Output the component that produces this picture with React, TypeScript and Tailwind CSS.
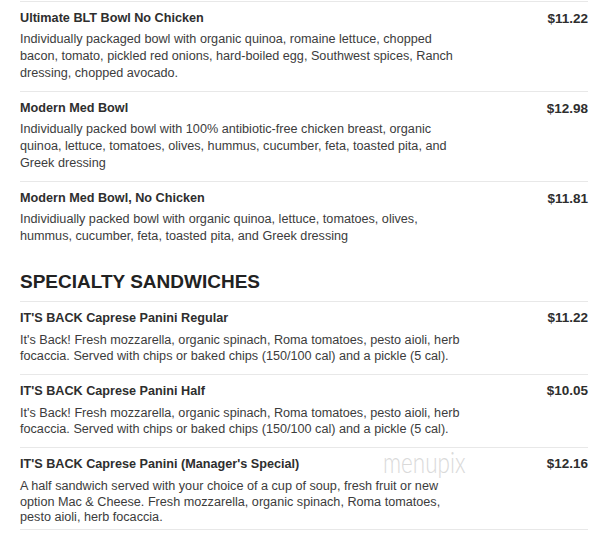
import React from 'react';

interface Item {
  name: string;
  price: string;
  description: string;
}

const bowls: Item[] = [
  {
    name: 'Ultimate BLT Bowl No Chicken',
    price: '$11.22',
    description:
      'Individually packaged bowl with organic quinoa, romaine lettuce, chopped bacon, tomato, pickled red onions, hard-boiled egg, Southwest spices, Ranch dressing, chopped avocado.',
  },
  {
    name: 'Modern Med Bowl',
    price: '$12.98',
    description:
      'Individually packed bowl with 100% antibiotic-free chicken breast, organic quinoa, lettuce, tomatoes, olives, hummus, cucumber, feta, toasted pita, and Greek dressing',
  },
  {
    name: 'Modern Med Bowl, No Chicken',
    price: '$11.81',
    description:
      'Individiually packed bowl with organic quinoa, lettuce, tomatoes, olives, hummus, cucumber, feta, toasted pita, and Greek dressing',
  },
];

const sandwiches: Item[] = [
  {
    name: "IT'S BACK Caprese Panini Regular",
    price: '$11.22',
    description:
      "It's Back! Fresh mozzarella, organic spinach, Roma tomatoes, pesto aioli, herb focaccia. Served with chips or baked chips (150/100 cal) and a pickle (5 cal).",
  },
  {
    name: "IT'S BACK Caprese Panini Half",
    price: '$10.05',
    description:
      "It's Back! Fresh mozzarella, organic spinach, Roma tomatoes, pesto aioli, herb focaccia. Served with chips or baked chips (150/100 cal) and a pickle (5 cal).",
  },
  {
    name: "IT'S BACK Caprese Panini (Manager's Special)",
    price: '$12.16',
    description:
      'A half sandwich served with your choice of a cup of soup, fresh fruit or new option Mac & Cheese. Fresh mozzarella, organic spinach, Roma tomatoes, pesto aioli, herb focaccia.',
  },
];

function BowlItem({ item }: { item: Item }) {
  return (
    <div className="border-t border-[#e8e8e8] pt-[8px] pb-[9px]">
      <div className="flex items-start justify-between">
        <div className="w-[450px]">
          <div className="text-[12.65px] font-bold leading-[17px] text-[#2e2e2e]">{item.name}</div>
          <p className="mt-[4px] text-[12.65px] leading-[17px] text-[#3c3c3c]">{item.description}</p>
        </div>
        <div className="text-[13.5px] font-bold leading-[17px] text-[#2e2e2e]">{item.price}</div>
      </div>
    </div>
  );
}

function SandwichItem({ item, last }: { item: Item; last?: boolean }) {
  return (
    <div className={`border-t border-[#e8e8e8] pt-[8px] ${last ? 'border-b pb-[3px]' : 'pb-[10px]'}`}>
      <div className="flex items-start justify-between">
        <div className="w-[450px]">
          <div className="text-[12.65px] font-bold leading-[16px] text-[#2e2e2e]">{item.name}</div>
          <p className="mt-[7px] text-[12.65px] leading-[15.5px] text-[#3c3c3c]">{item.description}</p>
        </div>
        <div className="text-[13.5px] font-bold leading-[16px] text-[#2e2e2e]">{item.price}</div>
      </div>
    </div>
  );
}

export default function App() {
  return (
    <div className="relative min-h-[541px] bg-white pt-px" style={{ fontFamily: '"Liberation Sans", Arial, sans-serif' }}>
      <div className="ml-[20px] w-[568px]">
        {bowls.map((item) => (
          <BowlItem key={item.name} item={item} />
        ))}

        <h2 className="mt-[17px] pb-[8px] text-[19px] font-bold leading-[22px] text-[#222]">SPECIALTY SANDWICHES</h2>

        {sandwiches.map((item, i) => (
          <SandwichItem key={item.name} item={item} last={i === sandwiches.length - 1} />
        ))}
      </div>

      {/* watermark */}
      <div
        className="absolute left-[383px] top-[446px] origin-left scale-x-75 text-[30px] font-light leading-none text-[#dadada]"
        style={{ fontFamily: 'Lato, sans-serif' }}
      >
        menupix
      </div>
    </div>
  );
}
